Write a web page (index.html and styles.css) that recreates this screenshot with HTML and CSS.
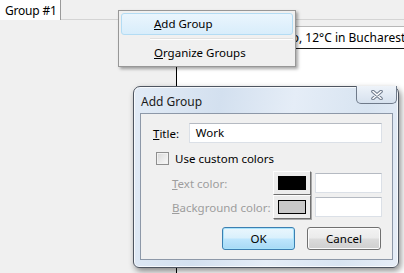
FILE: index.html
```html
<!DOCTYPE html>
<html lang="en">
<head>
  <meta charset="UTF-8"/>
  <title>Add Group</title>
  <link rel="stylesheet" href="styles.css">
</head>
<body>

  <!-- tab strip -->
  <div class="tabs">
    <div class="tab">Group #1</div>
  </div>

  <!-- workspace behind the popups -->
  <div class="workspace">
    <div class="side"></div>
    <div class="page">
      <div class="page-head">Weather Info - Meteo, 12°C in Bucharest,Bucharest, Romania</div>
      <div class="page-body"></div>
    </div>
  </div>

  <!-- context menu -->
  <div class="menu">
    <div class="menu-item active"><u>A</u>dd Group</div>
    <div class="menu-sep"></div>
    <div class="menu-item"><u>O</u>rganize Groups</div>
  </div>

  <!-- dialog window -->
  <div class="dialog">
    <div class="dialog-title">Add Group</div>
    <div class="close-btn">
      <svg width="14" height="10" viewBox="0 0 14 10">
        <path d="M3 1.5 L11 8.5 M11 1.5 L3 8.5" stroke="#6f7b8c" stroke-width="3.6" stroke-linecap="round"/>
        <path d="M3 1.5 L11 8.5 M11 1.5 L3 8.5" stroke="#ffffff" stroke-width="1.6" stroke-linecap="round"/>
      </svg>
    </div>
    <div class="client">
      <div class="row title-row">
        <label class="lbl-title"><u>T</u>itle:</label>
        <div class="textbox">Work</div>
      </div>
      <div class="row check-row">
        <span class="checkbox"></span>
        <span>Use custom colors</span>
      </div>
      <div class="row color-row first">
        <span class="lbl-color"><u>T</u>ext color:</span>
        <span class="color-btn"><span class="swatch black"></span></span>
        <span class="textbox small"></span>
      </div>
      <div class="row color-row">
        <span class="lbl-color"><u>B</u>ackground color:</span>
        <span class="color-btn"><span class="swatch grey"></span></span>
        <span class="textbox small"></span>
      </div>
      <div class="row buttons">
        <button class="btn default">OK</button>
        <button class="btn">Cancel</button>
      </div>
    </div>
  </div>

</body>
</html>
```

FILE: styles.css
```css
* {
  margin: 0; padding: 0;
  box-sizing: border-box;
}

body {
  font-family: 'Noto Sans', 'Open Sans', sans-serif;
  font-size: 11.5px;
  color: #000;
  background: #f0f0f0;
  width: 404px;
  height: 273px;
  overflow: hidden;
  position: relative;
}

u { text-decoration: underline; text-underline-offset: 1px; }

.tabs {
  height: 20px;
  border-bottom: 1px solid #d4d4d4;
  display: flex;
}

.tab {
  width: 61px;
  height: 20px;
  background: #fff;
  border-right: 1px solid #9a9a9a;
  padding: 2px 0 0 5px;
  font-size: 12px;
  letter-spacing: -0.2px;
}

.workspace {
  display: flex;
  padding-top: 6px;
  height: 253px;
}

.side {
  width: 176px;
  flex-shrink: 0;
}

.page {
  flex: 1;
  min-width: 0;
  display: flex;
  flex-direction: column;
  background: #fff;
  border-top: 1px solid #b8b8b8;
  border-left: 1px solid #000;
}

.page-head {
  height: 22px;
  border-bottom: 1px solid #1a1a1a;
  white-space: nowrap;
  overflow: hidden;
  padding: 2px 0 0 2px;
  font-size: 12px;
}

.page-body { flex: 1; }

/* menu */
.menu {
  position: absolute;
  left: 118px; top: 10px;
  width: 178px;
  background: #f0f0f0;
  border: 1px solid #979797;
  padding: 2px;
  box-shadow: 2px 2px 3px rgba(0,0,0,0.35);
}

.menu-item {
  height: 22px;
  line-height: 20px;
  padding-left: 32px;
  border: 1px solid transparent;
  border-radius: 3px;
}

.menu-item.active {
  background: linear-gradient(#eaf5fd, #d8edfb);
  border-color: #b3dcf4;
}

.menu-sep {
  margin: 3px 0 2px 29px;
  height: 2px;
  border-top: 1px solid #e0e0e0;
  border-bottom: 1px solid #fff;
}

/* dialog */
.dialog {
  position: absolute;
  left: 133px; top: 86px;
  width: 266px;
  height: 182px;
  border: 1px solid #4e5560;
  border-radius: 7px 7px 6px 6px;
  background: linear-gradient(100deg, #e2ebf6 0%, #d3e0ef 30%, #e5edf7 55%, #d8e4f1 80%, #e6edf7 100%);
  box-shadow: 2px 3px 6px rgba(0,0,0,0.45), inset 0 0 0 1px rgba(255,255,255,0.7);
  display: flex;
  flex-direction: column;
}

.dialog-title {
  height: 26px;
  padding: 6px 0 0 7px;
  font-size: 12px;
  color: #1b1b1b;
}

.close-btn {
  position: absolute;
  right: 1px; top: -1px;
  width: 41px;
  height: 18px;
  border: 1px solid #6f7a8a;
  border-top: none;
  border-radius: 0 0 5px 5px;
  background: linear-gradient(#eef3f9, #d6e1ee);
  display: flex;
  align-items: center;
  justify-content: center;
}

.client {
  margin: 0 5px 7px 6px;
  flex: 1;
  background: #f0f0f0;
  border: 1px solid #8d98a8;
  padding: 9px 10px 0 12px;
}

.row {
  display: flex;
  align-items: center;
}

.textbox {
  height: 20px;
  width: 194px;
  background: #fff;
  border: 1px solid #dbe0e7;
  border-top-color: #b5bac2;
  padding: 1px 0 0 6px;
}

.textbox.small {
  width: 67px;
  margin-left: 4px;
}

.lbl-title { width: 36px; }

.check-row {
  margin-top: 8px;
  padding-left: 3px;
  gap: 6px;
}

.checkbox {
  width: 13px;
  height: 13px;
  border: 1px solid #8f8f8f;
  background: linear-gradient(135deg, #d8d8d8, #fafafa);
  box-shadow: inset 0 0 0 1px #f2f2f2;
}

.color-row { padding-left: 19px; }
.color-row.first { margin-top: 5px; }

.lbl-color {
  width: 102px;
  color: #9d9d9d;
}

.color-btn {
  width: 38px;
  height: 24px;
  border: 1px solid;
  border-color: #fdfdfd #707070 #707070 #fdfdfd;
  box-shadow: 1px 1px 0 #a8a8a8;
  background: #ececec;
  padding: 4px 0 0 4px;
}

.swatch {
  display: block;
  width: 28px;
  height: 14px;
  border: 1px solid #000;
}

.swatch.black { background: #000; }
.swatch.grey { background: #c8c8c8; }

.buttons {
  margin-top: 8px;
  justify-content: flex-end;
  gap: 12px;
  padding-right: 1px;
}

.btn {
  font-family: inherit;
  font-size: 11.5px;
  width: 74px;
  height: 23px;
  border: 1px solid #707070;
  border-radius: 3px;
  background: linear-gradient(#f3f3f3 0%, #ebebeb 48%, #dcdcdc 52%, #cfcfcf 100%);
  box-shadow: inset 0 0 0 1px #fbfbfb;
  color: #000;
}

.btn.default {
  width: 73px;
  border-color: #3c7fb1;
  box-shadow: inset 0 0 0 1px #a8e3fb;
  background: linear-gradient(#eaf6fd 0%, #d9f0fc 48%, #bee6fd 52%, #a7d9f5 100%);
}
```
